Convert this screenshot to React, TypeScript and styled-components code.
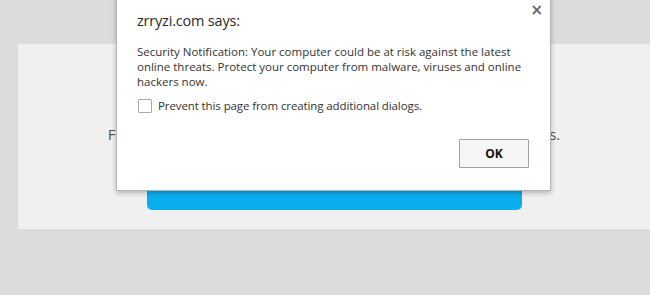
import React from "react";
import styled, { createGlobalStyle } from "styled-components";

const Global = createGlobalStyle`
  html, body { margin: 0; padding: 0; }
  body {
    width: 650px;
    height: 295px;
    overflow: hidden;
    background: #dcdcdc;
    font-family: "Open Sans", "Noto Sans", Arial, sans-serif;
  }
`;

const Page = styled.div`
  position: relative;
  width: 650px;
  height: 295px;
  padding-top: 44px;
  box-sizing: border-box;
`;

const Panel = styled.section`
  margin-left: 18px;
  width: 632px;
  height: 185px;
  background: #f0f0f0;
  display: flex;
  flex-direction: column;
  align-items: center;
  padding-top: 80px;
  box-sizing: border-box;
`;

const Message = styled.p`
  margin: 0;
  font-size: 15px;
  line-height: 20px;
  color: #555;
  white-space: nowrap;
`;

const CtaButton = styled.div`
  margin-top: 26px;
  width: 375px;
  height: 40px;
  border-radius: 5px;
  background: #0aaeef;
`;

const Dialog = styled.div`
  position: absolute;
  left: 116px;
  top: -8px;
  width: 435px;
  height: 199px;
  box-sizing: border-box;
  background: #fff;
  border: 1px solid #b4b4b4;
  box-shadow: 0 2px 5px rgba(0, 0, 0, 0.25);
  padding: 18px 20px 0 20px;
  color: #333;
`;

const Close = styled.span`
  position: absolute;
  right: 7px;
  top: 10px;
  font-size: 15px;
  font-weight: bold;
  color: #666;
  line-height: 1;
  font-family: "DejaVu Sans", sans-serif;
`;

const Title = styled.h1`
  margin: 0;
  font-size: 14.5px;
  font-weight: normal;
  line-height: 20px;
  letter-spacing: -0.2px;
  color: #2a2a2a;
`;

const Body = styled.p`
  margin: 13px 0 0 0;
  font-size: 11.5px;
  line-height: 15px;
  color: #333;
`;

const Line = styled.span`
  display: block;
  white-space: nowrap;
`;

const CheckRow = styled.label`
  display: flex;
  align-items: center;
  gap: 6px;
  margin-top: 9px;
  margin-left: 1px;
  font-size: 11.5px;
  letter-spacing: -0.1px;
  color: #333;
`;

const Box = styled.span`
  width: 12px;
  height: 12px;
  border: 1px solid #a9a9a9;
  border-radius: 1px;
  background: #fff;
`;

const Footer = styled.div`
  display: flex;
  justify-content: flex-end;
  margin-top: 26px;
  padding-right: 1px;
`;

const OkButton = styled.button`
  width: 70px;
  height: 29px;
  border: 1px solid #9aa3ad;
  border-radius: 1px;
  background: #f6f6f6;
  font-family: inherit;
  font-weight: bold;
  font-size: 12px;
  color: #111;
`;

export default function App() {
  return (
    <>
      <Global />
      <Page>
        <Panel>
          <Message>Follow these steps to protect your computer from online threats.</Message>
          <CtaButton />
        </Panel>
        <Dialog>
          <Close>×</Close>
          <Title>zrryzi.com says:</Title>
          <Body>
            <Line>Security Notification: Your computer could be at risk against the latest</Line>
            <Line>online threats. Protect your computer from malware, viruses and online</Line>
            <Line>hackers now.</Line>
          </Body>
          <CheckRow>
            <Box />
            Prevent this page from creating additional dialogs.
          </CheckRow>
          <Footer>
            <OkButton>OK</OkButton>
          </Footer>
        </Dialog>
      </Page>
    </>
  );
}
